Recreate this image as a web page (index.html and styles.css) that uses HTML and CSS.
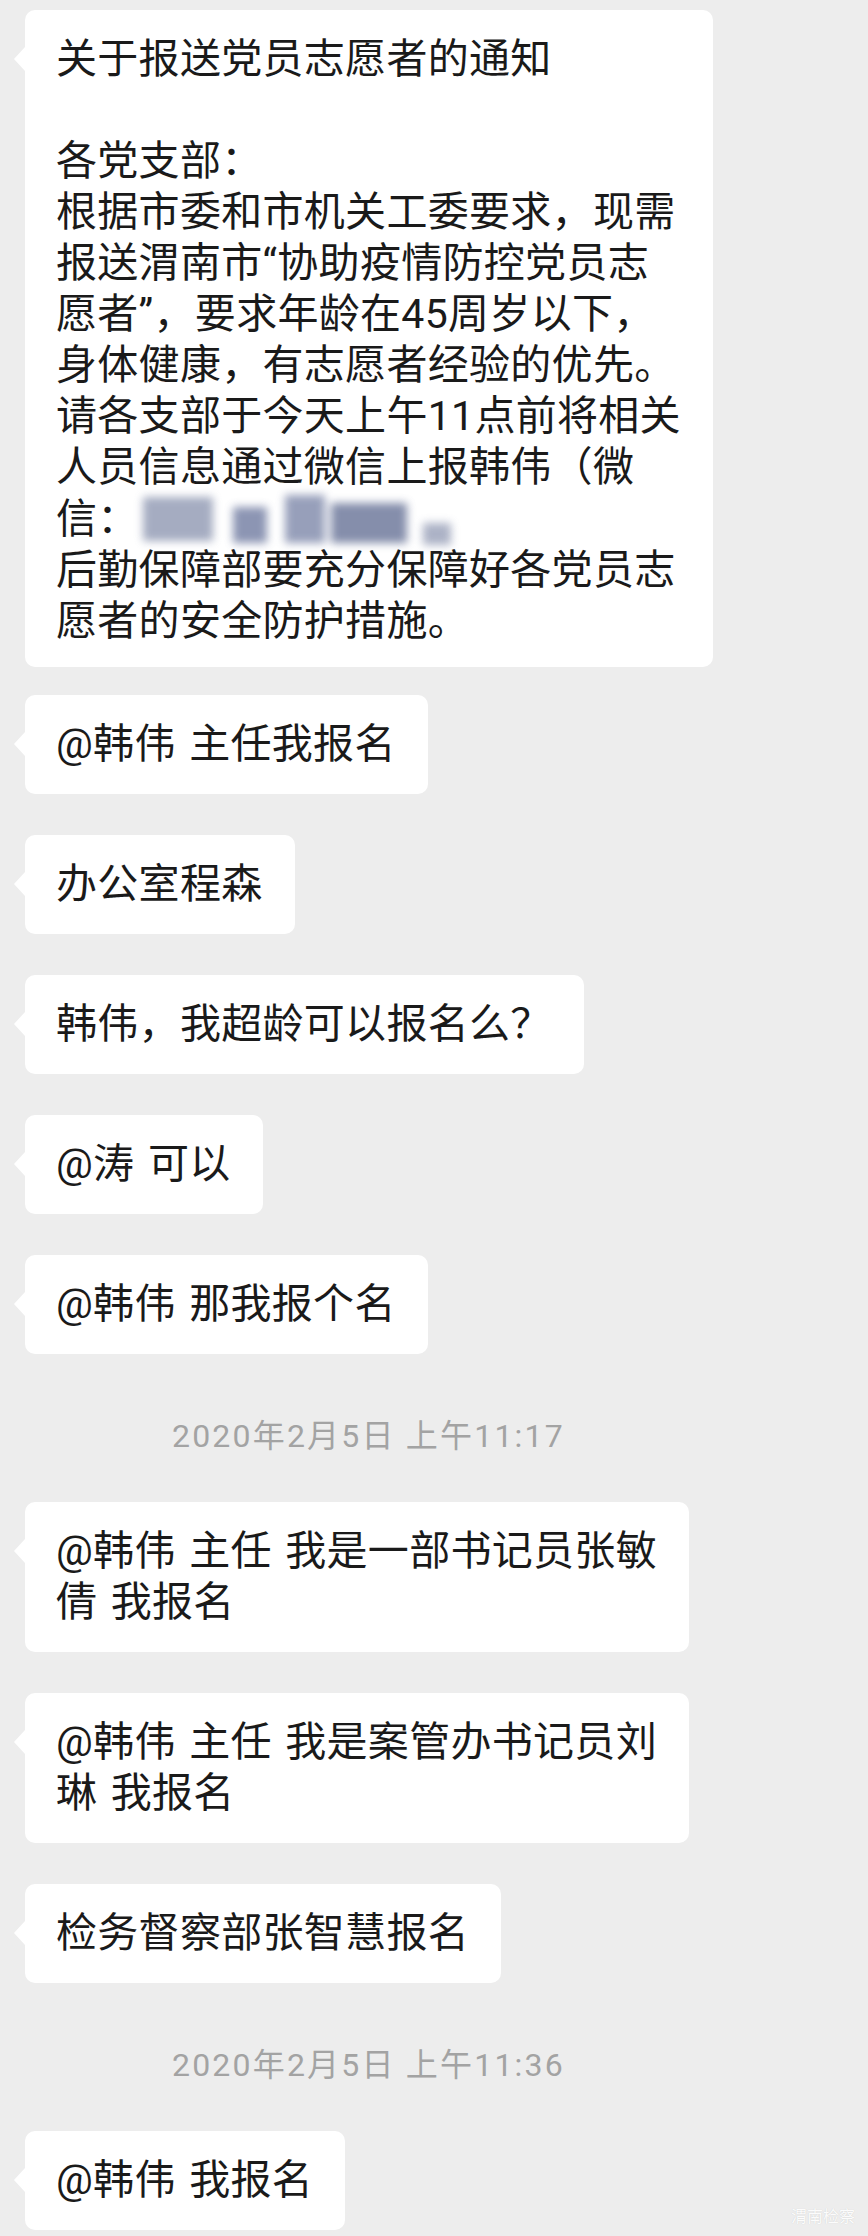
FILE: index.html
```html
<!DOCTYPE html>
<html lang="zh-CN">
<head>
<meta charset="utf-8">
<title>聊天记录</title>
<link rel="stylesheet" href="styles.css">
</head>
<body>
<div class="chat">
  <div class="bubble big">关于报送党员志愿者的通知<br>&nbsp;<br>各党支部：<br>根据市委和市机关工委要求，现需<br>报送渭南市“协助疫情防控党员志<br>愿者”，要求年龄在45周岁以下，<br>身体健康，有志愿者经验的优先。<br>请各支部于今天上午11点前将相关<br>人员信息通过微信上报韩伟（微<br>信：<span class="redact"></span><br>后勤保障部要充分保障好各党员志<br>愿者的安全防护措施。</div>
  <div class="bubble">@韩伟 主任我报名</div>
  <div class="bubble">办公室程森</div>
  <div class="bubble">韩伟，我超龄可以报名么？</div>
  <div class="bubble">@涛 可以</div>
  <div class="bubble">@韩伟 那我报个名</div>
  <div class="time">2020年2月5日 上午11:17</div>
  <div class="bubble">@韩伟 主任 我是一部书记员张敏<br>倩 我报名</div>
  <div class="bubble">@韩伟 主任 我是案管办书记员刘<br>琳 我报名</div>
  <div class="bubble">检务督察部张智慧报名</div>
  <div class="time">2020年2月5日 上午11:36</div>
  <div class="bubble last">@韩伟 我报名</div>
</div>
<div class="watermark">渭南检察</div>
</body>
</html>
```
FILE: styles.css
```css
html, body {
  margin: 0;
  padding: 0;
}
body {
  background: #ededed;
  font-family: Roboto, "Noto Sans CJK SC", sans-serif;
  position: relative;
  height: 2236px;
  overflow: hidden;
}
.chat {
  display: flex;
  flex-direction: column;
  align-items: flex-start;
  padding: 10px 0 0 25px;
}
.bubble {
  position: relative;
  background: #ffffff;
  border-radius: 10px;
  padding: 24px 32px 24px 31px;
  font-size: 41px;
  line-height: 51px;
  color: #1a1a1a;
  white-space: nowrap;
  letter-spacing: 0.3px;
  word-spacing: 3px;
  margin-bottom: 41px;
}
.bubble::before {
  content: "";
  position: absolute;
  left: -11px;
  top: 37px;
  width: 0;
  height: 0;
  border-top: 12px solid transparent;
  border-bottom: 12px solid transparent;
  border-right: 11px solid #ffffff;
}
.bubble.big {
  padding-bottom: 20px;
  margin-bottom: 28px;
}
.bubble.last {
  margin-bottom: 0;
}
.redact {
  display: inline-block;
  width: 318px;
  height: 52px;
  vertical-align: -12px;
  margin-left: -4px;
  background:
    linear-gradient(#8791ad, #8791ad) 8px 4px / 70px 44px no-repeat,
    linear-gradient(#66729a, #66729a) 98px 14px / 34px 36px no-repeat,
    linear-gradient(#7580a4, #7580a4) 150px 2px / 40px 48px no-repeat,
    linear-gradient(#5d6990, #5d6990) 196px 10px / 76px 40px no-repeat,
    linear-gradient(#9199b3, #9199b3) 288px 30px / 28px 22px no-repeat;
  filter: blur(4px);
  opacity: 0.75;
}
.time {
  margin: 21px 0 46px 147px;
  font-size: 32px;
  line-height: 40px;
  color: #a3a3a3;
  letter-spacing: 2.2px;
  white-space: nowrap;
}
.watermark {
  position: absolute;
  right: 13px;
  bottom: 12px;
  font-family: "Noto Sans CJK SC", sans-serif;
  font-size: 16px;
  line-height: 18px;
  color: rgba(255, 255, 255, 0.95);
  text-shadow: 0 0 1px rgba(0, 0, 0, 0.15);
}
```
